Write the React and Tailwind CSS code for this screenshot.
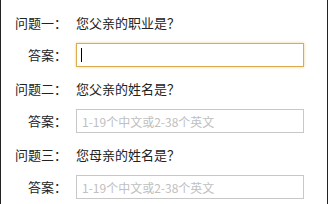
export default function App() {
  const font = { fontFamily: '"Noto Sans CJK SC", "Noto Sans", sans-serif' };
  const rows = [
    { label: "问题一：", q: "您父亲的职业是？", focus: true },
    { label: "问题二：", q: "您父亲的姓名是？" },
    { label: "问题三：", q: "您母亲的姓名是？" },
  ];
  return (
    <div
      className="w-[328px] h-[204px] bg-white border-l border-r border-[#222] flex flex-col pt-[13px] overflow-hidden"
      style={font}
    >
      {rows.map((r, i) => (
        <div key={i} className={i === 0 ? "flex flex-col" : "flex flex-col mt-[12px]"}>
          <div className="flex items-center h-[20px]">
            <div className="w-[66px] text-right text-[13px] text-[#222] leading-[20px] shrink-0">{r.label}</div>
            <div className="ml-[9px] text-[13px] text-[#222] leading-[20px]">{r.q}</div>
          </div>
          <div className="flex items-center h-[24px] mt-[10px]">
            <div className="w-[66px] text-right text-[13px] text-[#222] leading-[20px] shrink-0">答案：</div>
            {r.focus ? (
              <div className="ml-[9px] w-[228px] h-[24px] border border-[#dcaa52] shadow-[0_0_3px_#efcf8e] bg-white relative">
                <div className="absolute left-[4px] top-[4px] w-[1px] h-[14px] bg-black" />
              </div>
            ) : (
              <input
                className="ml-[9px] w-[228px] h-[24px] border border-[#c8c8c8] bg-white px-[5px] text-[12px] outline-none placeholder:text-[#c0c0c0]"
                placeholder="1-19个中文或2-38个英文"
                style={font}
                readOnly
              />
            )}
          </div>
        </div>
      ))}
    </div>
  );
}
